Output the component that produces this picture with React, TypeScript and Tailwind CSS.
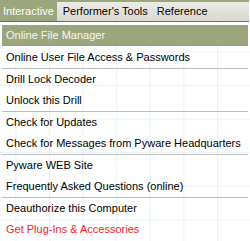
const items: { label: string; sep?: boolean; red?: boolean }[] = [
  { label: "Online User File Access & Passwords", sep: true },
  { label: "Drill Lock Decoder" },
  { label: "Unlock this Drill", sep: true },
  { label: "Check for Updates" },
  { label: "Check for Messages from Pyware Headquarters", sep: true },
  { label: "Pyware WEB Site" },
  { label: "Frequently Asked Questions (online)", sep: true },
  { label: "Deauthorize this Computer" },
  { label: "Get Plug-Ins & Accessories", red: true },
];

export default function App() {
  return (
    <div
      className="w-[250px] h-[241px] overflow-hidden bg-white text-[11px] leading-none text-black bg-[image:linear-gradient(to_right,#e6f3f6_1px,transparent_1px),linear-gradient(to_bottom,#e6f3f6_1px,transparent_1px)] bg-[size:33.6px_33.6px] bg-[position:15.4px_17.8px]"
      style={{ fontFamily: '"Liberation Sans", Arial, sans-serif' }}
    >
      {/* tab bar */}
      <div className="flex h-[22px] w-[249px] gap-[3px] border-t-2 border-b border-t-[#9ba67c] border-b-[#6e6e6e] bg-gradient-to-b from-[#ecece6] to-[#d8d8d0]">
        <div className="-mt-[2px] flex items-center bg-[#9ba67c] px-[3px] pt-[2px] text-white">Interactive</div>
        <div className="flex items-center px-[3px]">Performer's Tools</div>
        <div className="flex items-center px-[3px]">Reference</div>
      </div>

      {/* menu */}
      <div className="mt-[3px] mx-[2px] w-[246px]">
        <div className="flex h-[21px] items-center bg-[#9ba67c] pl-[4px] text-[#f6f6f2]">Online File Manager</div>
        <div className="h-[1px]" />
        {items.map((it) => (
          <div key={it.label}>
            <div className={`flex h-[21px] items-center pl-[4px] ${it.red ? "text-[#f41c24]" : ""}`}>{it.label}</div>
            {it.sep && <div className="h-[1px] bg-[#bdbdbd]" />}
          </div>
        ))}
      </div>
    </div>
  );
}
